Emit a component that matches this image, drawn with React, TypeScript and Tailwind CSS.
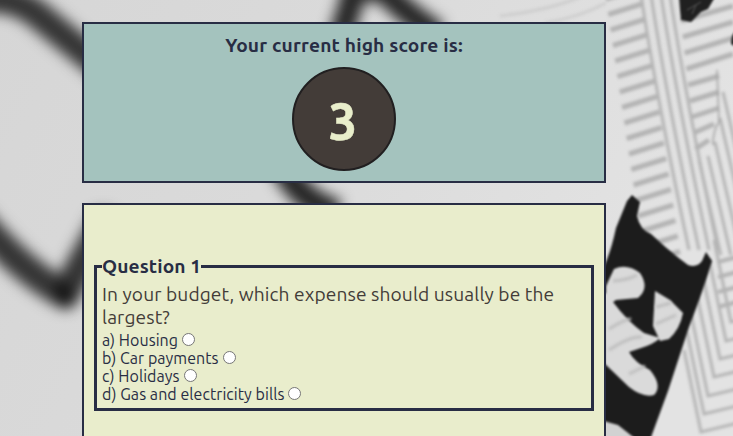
import React from 'react';

const options = ['a) Housing', 'b) Car payments', 'c) Holidays', 'd) Gas and electricity bills'];

function Backdrop() {
  const leftRungs = Array.from({ length: 18 }, (_, i) => {
    const y = -1 + i * 15.5;
    const x = 606 + i * 2.3;
    return `M${x} ${y}L${x + 35} ${y - 11}`;
  }).join('');
  const rails = [641, 651, 661, 670].map((x) => `M${x} -5Q${x + 16} 100 ${x + 48} 250`).join('');
  const rightRungs = Array.from({ length: 9 }, (_, i) => {
    const y = 21 + i * 16;
    return `M${681 + i * 1.8} ${y}L${i < 4 ? 733 : 719 - Math.max(0, i - 6) * 5} ${y - (i < 4 ? 15 : 9)}`;
  }).join('');
  const upperRails = [
    [699, 160],
    [708, 156],
    [715, 142],
    [720, 118],
    [723, 92],
  ].map(([x, y]) => `M${x} ${y}L${x + (255 - y) * 0.23} 255`).join('');
  const chevrons = [
    [731, 322],
    [726, 341],
    [720, 359],
    [714, 377],
    [708, 396],
    [704, 414],
    [701, 432],
  ].map(([x, y]) => `M${x - 17} ${y - 82}L${x} ${y}L${x + 45} ${y - 11}`).join('');
  const cornerRungs = [255, 270, 285, 300].map((y) => `M718 ${y + 7}L737 ${y + 2}`).join('');

  return (
    <svg className="absolute inset-0 h-full w-full" viewBox="0 0 733 436" aria-hidden="true">
      <defs>
        <linearGradient id="paper" x1="0" y1="0" x2="1" y2="0.3">
          <stop offset="0" stopColor="#d6d6d6" />
          <stop offset="0.45" stopColor="#dadada" />
          <stop offset="1" stopColor="#e3e3e3" />
        </linearGradient>
        <filter id="far" x="-40%" y="-40%" width="180%" height="180%" colorInterpolationFilters="sRGB"><feGaussianBlur stdDeviation="7" /></filter>
        <filter id="mid" x="-20%" y="-20%" width="140%" height="140%" colorInterpolationFilters="sRGB"><feGaussianBlur stdDeviation="1.7" /></filter>
        <filter id="near" x="-20%" y="-20%" width="140%" height="140%" colorInterpolationFilters="sRGB"><feGaussianBlur stdDeviation="1" /></filter>
      </defs>
      <rect width="733" height="436" fill="url(#paper)" />
      <g filter="url(#far)" fill="none" stroke="#343434" strokeLinecap="round" strokeLinejoin="round">
        <path d="M-25 0Q12 -6 38 15L105 70" strokeWidth="28" />
        <path d="M-20 222Q25 274 65 294L103 225" strokeWidth="29" />
        <path d="M62 290L66 300" stroke="#141414" strokeWidth="18" />
      </g>
      <g filter="url(#far)" fill="none" stroke="#242424">
        <path d="M340 35Q349 15 355 -15M372 -25Q391 4 438 34" strokeWidth="24" />
        <path d="M350 -5H390" strokeWidth="14" />
        <path d="M281 163Q298 201 338 212" strokeWidth="25" />
      </g>
      <g filter="url(#mid)" fill="none" stroke="#b4b4b4">
        <path d={leftRungs} strokeWidth="5" />
        <path d={rails} strokeWidth="3" />
        <path d={rightRungs} strokeWidth="5" />
        <path d={upperRails} strokeWidth="3" />
        <path d={chevrons} strokeWidth="3" />
        <path d={cornerRungs} strokeWidth="4" />
        <path d="M717 70L719 122Q713 130 713 145" stroke="#a0a0a0" strokeWidth="1.5" />
        <path d="M500 16Q550 10 580 -3M545 23Q580 17 606 3" stroke="#cecece" strokeWidth="3" />
      </g>
      <g filter="url(#near)">
        <path d="M632 195L640 202L637 216Q640 230 651 234Q670 252 688 265Q697 268 702 261L706 252L712 261Q704 288 689 327L668 391L650 440H598V277Q609 261 616 228L627 201Z" fill="#1c1c1c" />
        <path d="M606 286L614 269Q627 263 640 273Q650 288 638 298L616 300L606 307Z" fill="#dadada" />
        <path d="M604 292L613 302Q628 322 644 333L660 338Q654 344 641 348L629 352Q635 363 650 370Q663 386 654 395Q643 398 629 387L605 364Z" fill="#dadada" />
        <path d="M655 291L670 300L683 313Q680 329 669 339L660 341L653 326Z" fill="#dadada" />
        <path d="M600 420L618 425L637 440H600Z" fill="#d2d2d2" />
        <path d="M679 -3H715L708 9L701 12L691 22L681 20L680 10Z" fill="#202020" />
        <path d="M687 10L701 2M692 14L696 5" stroke="#5a5a5a" fill="none" />
        <path d="M736 31Q731 34 731 44L736 47Z" fill="#202020" />
      </g>
      <path d="M609 329Q625 319 631 319M609 350Q630 336 642 337M656 307L671 303M656 324L676 315M613 281Q628 280 637 275M629 374L645 366" stroke="#bebebe" strokeWidth="3" fill="none" filter="url(#mid)" />
    </svg>
  );
}

export default function App() {
  return (
    <main className="relative h-[436px] overflow-hidden bg-[#d8d8d8] font-['Ubuntu','Noto_Sans',sans-serif] text-[#282d44]">
      <Backdrop />
      <div className="relative ml-[82px] flex w-[524px] flex-col gap-5 pt-[22px]">
        <section className="flex h-[161px] flex-col items-center border-2 border-[#282d44] bg-[#a4c3be] pt-[10px]">
          <h2 className="h-[23px] whitespace-nowrap text-[19.2px] leading-[23px] font-semibold tracking-[0.17px]">Your current high score is:</h2>
          <div className="mt-[10px] flex h-[104px] w-[104px] items-center justify-center rounded-full border-2 border-[#211f20] bg-[#433c38] pr-[2px] pt-1 text-[51px] leading-none font-bold text-[#e9eecb] [-webkit-text-stroke:0.5px_#e9eecb]">
            3
          </div>
        </section>
        <section className="h-[260px] border-2 border-[#282d44] bg-[#e9edcc] px-[10px] pt-[50px]">
          <fieldset className="h-[156px] border-[3px] border-[#282d44] px-[5px]">
            <legend className="h-[23px] whitespace-nowrap text-[19.2px] leading-[23px] font-semibold tracking-[0.1px]">Question 1</legend>
            <p className="mt-[5px] text-[19.2px] leading-[23px] tracking-[0.09px] whitespace-nowrap text-[#433c38]">
              In your budget, which expense should usually be the<br />largest?
            </p>
            <div className="mt-[2px]">
              {options.map((option) => (
                <label key={option} className="flex h-[18px] items-center gap-1 text-[16px] leading-[18px]">
                  <span className="tracking-[0.05px]">{option}</span>
                  <input type="radio" name="budget" className="mb-px h-[13px] w-[13px] appearance-none rounded-full border border-[#767676] bg-white checked:border-4" />
                </label>
              ))}
            </div>
          </fieldset>
        </section>
      </div>
    </main>
  );
}
